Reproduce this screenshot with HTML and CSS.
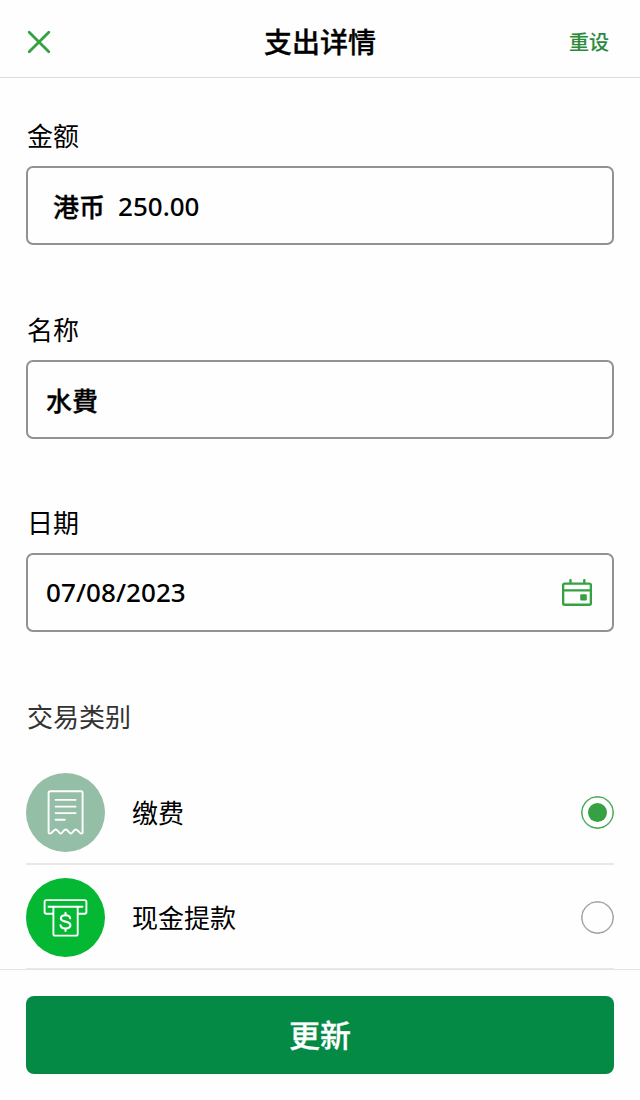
FILE: index.html
```html
<!DOCTYPE html>
<html lang="zh-CN">
<head>
<meta charset="utf-8">
<title>支出详情</title>
<link rel="stylesheet" href="styles.css">
</head>
<body>
<div class="screen">
  <header class="header">
    <button class="close" aria-label="关闭">
      <svg width="24" height="24" viewBox="0 0 24 24"><path d="M2.2 2.2 21.8 21.8M21.8 2.2 2.2 21.8"/></svg>
    </button>
    <h1 class="title">支出详情</h1>
    <button class="reset">重设</button>
  </header>
  <main class="content">
    <section class="field">
      <div class="label">金额</div>
      <div class="box box-amount"><span class="currency">港币</span><span>250.00</span></div>
    </section>
    <section class="field field-name">
      <div class="label">名称</div>
      <div class="box"><span lang="zh-TW" class="trad">水費</span></div>
    </section>
    <section class="field">
      <div class="label">日期</div>
      <div class="box box-date"><span class="date">07/08/2023</span>
        <svg class="calendar" width="30" height="28" viewBox="0 0 30 28"><path d="M2.6 4.6H27.4Q28.9 4.6 28.9 6.1V24.3Q28.9 25.8 27.4 25.8H2.6Q1.1 25.8 1.1 24.3V6.1Q1.1 4.6 2.6 4.6ZM1.1 11.4H28.9M8.5 4.6V1.1M22.3 4.6V1.1"/><rect x="18.2" y="15.2" width="6.6" height="6.3" rx="1"/></svg>
      </div>
    </section>
    <section class="categories">
      <div class="label label-muted">交易类别</div>
      <div class="row">
        <span class="badge badge-bill">
          <svg width="79" height="79" viewBox="0 0 79 79"><path d="M24 18.2H55Q56.6 18.2 56.6 19.8V59.5Q55.7 61.5 54 59.8L50.9 56.9Q49.8 56 48.7 56.9L46 59.9Q44.8 61 43.7 59.9L40.9 56.9Q39.7 56 38.6 56.9L35.9 59.9Q34.7 61 33.6 59.9L30.8 56.9Q29.7 56 28.6 56.9L25.6 59.8Q23.5 61.5 22.6 59.5V19.8Q22.6 18.2 24 18.2Z"/><path d="M29.6 26.9H49.6M29.6 33.6H49.6M29.6 40.1H49.6M29.6 46.8H38.8"/></svg>
        </span>
        <span class="name">缴费</span>
        <span class="radio radio-on"></span>
      </div>
      <div class="row">
        <span class="badge badge-cash">
          <svg width="79" height="79" viewBox="0 0 79 79"><path d="M27.3 35.7H20.3Q18.6 35.7 18.6 34V23.8Q18.6 22.1 20.3 22.1H58.7Q60.4 22.1 60.4 23.8V34Q60.4 35.7 58.7 35.7H52M22.5 28.8H56.5M27.4 28.8V56Q27.4 57.6 29 57.6H50.1Q51.7 57.6 51.7 56V28.8"/><path class="dollar" d="M44.2 40.3C43.9 38.3 42.1 37.3 39.5 37.3C36.7 37.3 34.9 38.6 34.9 40.6C34.9 45 44.4 42.2 44.4 47.1C44.4 49.3 42.4 50.5 39.5 50.5C36.7 50.5 34.7 49.3 34.5 47.2M39.5 34.8V37.3M39.5 50.5V53"/></svg>
        </span>
        <span class="name">现金提款</span>
        <span class="radio"></span>
      </div>
    </section>
  </main>
  <footer class="footer"><button class="submit">更新</button></footer>
</div>
</body>
</html>
```
FILE: styles.css
```css
* { box-sizing: border-box; }
body {
  margin: 0;
  background: #fefefe;
  color: #000;
  font-family: "Noto Sans", "Noto Sans CJK SC", sans-serif;
}
button {
  border: 0;
  padding: 0;
  background: none;
  font-family: inherit;
}
svg { display: block; fill: none; stroke-linecap: round; stroke-linejoin: round; }
.title, .currency, .trad, .submit { -webkit-text-stroke: 0.3px currentColor; }
.screen {
  display: flex;
  flex-direction: column;
  width: 640px;
  height: 1100px;
  overflow: hidden;
}
.header {
  display: grid;
  grid-template-columns: 100px 1fr 100px;
  align-items: center;
  flex: none;
  height: 78px;
  padding: 6px 31px 0 27px;
  border-bottom: 1px solid #dcdcdc;
}
.close { justify-self: start; }
.close svg { stroke: #35a143; stroke-width: 2.8; }
.title {
  margin: 0 0 0 4px;
  text-align: center;
  font-size: 28px;
  line-height: 38px;
  font-weight: 500;
}
.reset {
  justify-self: end;
  padding-top: 2px;
  font-size: 20px;
  line-height: 28px;
  font-weight: 500;
  color: #2c8a3d;
  -webkit-text-stroke: 0.1px currentColor;
}
.content {
  flex: 1;
  min-height: 0;
  padding: 40px 26px 0;
}
.field { height: 194px; }
.field-name { height: 193px; }
.label {
  height: 36px;
  margin-bottom: 12px;
  padding-left: 1px;
  font-size: 26px;
  line-height: 36px;
}
.label-muted { color: #333; margin-bottom: 25px; }
.box {
  display: flex;
  align-items: center;
  height: 79px;
  padding: 0 20px 0 18px;
  border: 2px solid #929292;
  border-radius: 7px;
  font-size: 26px;
  font-weight: 500;
}
.box > span { padding-bottom: 1px; -webkit-text-stroke-color: currentColor; }
.box-amount { padding-left: 25px; gap: 13px; }
.box-amount > span { padding-bottom: 0; }
.box-date { justify-content: space-between; }
.date { letter-spacing: 0.08px; }
.trad { font-family: "Noto Sans CJK TC", sans-serif; }
.calendar { stroke: #35a143; stroke-width: 2.4; }
.calendar rect { fill: #35a143; stroke: none; }
.row {
  display: flex;
  align-items: center;
  height: 105px;
  padding-top: 1px;
  border-bottom: 2px solid #e8e8e8;
}
.badge {
  width: 79px;
  height: 79px;
  border-radius: 50%;
}
.badge svg { stroke: #fff; stroke-width: 1.9; }
.badge .dollar { stroke-width: 2.1; }
.badge-bill { background: #94bea5; }
.badge-cash { background: #04b834; }
.name { flex: 1; margin-left: 27px; padding-top: 1px; font-size: 26px; line-height: 36px; }
.radio {
  display: flex;
  align-items: center;
  justify-content: center;
  width: 33px;
  height: 33px;
  border: 1px solid #999;
  border-radius: 50%;
  box-shadow: inset 0 0 0 0.5px #999;
}
.radio-on { border-color: #35a143; box-shadow: inset 0 0 0 0.5px #35a143; }
.radio-on::before {
  content: "";
  width: 19px;
  height: 19px;
  border-radius: 50%;
  background: #35a143;
}
.footer {
  flex: none;
  height: 131px;
  padding: 26px 26px 0;
  border-top: 1px solid #e4e4e4;
}
.submit {
  width: 100%;
  height: 78px;
  padding-bottom: 4px;
  border-radius: 8px;
  background: #048a45;
  color: #fff;
  font-size: 31px;
  font-weight: 500;
}
```
